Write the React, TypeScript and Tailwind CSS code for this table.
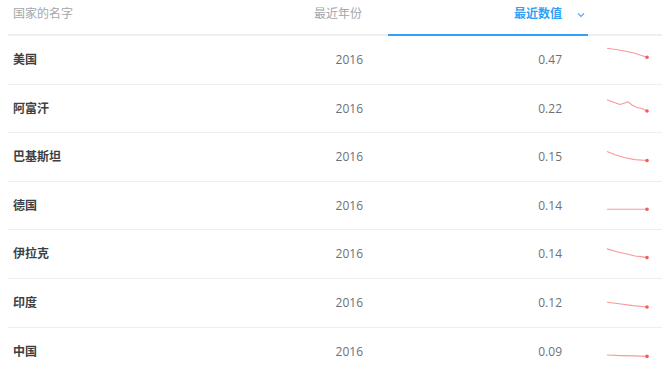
const rows = [
  { name: "美国", year: "2016", value: "0.47", pts: [[0, 12.3], [12, 14], [26, 16.8], [40, 21.3]] },
  { name: "阿富汗", year: "2016", value: "0.22", pts: [[0, 14.7], [6, 17], [13, 19.5], [18, 18], [21, 16.8], [25, 20], [30, 22.5], [35, 23.5], [40, 26]] },
  { name: "巴基斯坦", year: "2016", value: "0.15", pts: [[0, 18.5], [8, 21.8], [18, 24.8], [28, 26.6], [40, 27.5]] },
  { name: "德国", year: "2016", value: "0.14", pts: [[0, 27.2], [20, 27.3], [40, 27.3]] },
  { name: "伊拉克", year: "2016", value: "0.14", pts: [[0, 18.9], [10, 21.8], [20, 24], [28, 26], [34, 26.6], [40, 27.6]] },
  { name: "印度", year: "2016", value: "0.12", pts: [[0, 23.3], [12, 24.8], [26, 26.6], [40, 28]] },
  { name: "中国", year: "2016", value: "0.09", pts: [[0, 27], [14, 27.6], [28, 27.9], [40, 28.4]] },
];

function Spark({ pts }: { pts: number[][] }) {
  const d = pts.map((p, i) => `${i ? "L" : "M"}${p[0] + 1} ${p[1]}`).join(" ");
  const last = pts[pts.length - 1];
  return (
    <svg width="46" height="48" viewBox="0 0 46 48" className="ml-[18px]">
      <path d={d} fill="none" stroke="#f79a9a" strokeWidth="1.1" strokeLinejoin="round" />
      <circle cx={last[0] + 1} cy={last[1]} r="1.8" fill="#f25c5c" />
    </svg>
  );
}

export default function App() {
  return (
    <div className="h-[381px] w-[668px] overflow-hidden bg-white pl-2 text-[12px] [font-family:'Open_Sans','Noto_Sans_CJK_SC',sans-serif]">
      <div className="w-[654px]">
        <div className="grid h-[36px] grid-cols-[180px_200px_200px_74px] border-b-2 border-[#eceef0] leading-[18px]">
          <div className="pl-[5px] pt-[5px] text-[#a3a6aa]">国家的名字</div>
          <div className="pr-[26px] pt-[5px] text-right text-[#a3a6aa]">最近年份</div>
          <div className="-mb-[2px] flex justify-end border-b-2 border-[#2ea1f8] pt-[5px] text-[#2ea1f8]">
            <span className="font-semibold">最近数值</span>
            <svg width="8" height="18" viewBox="0 0 8 18" className="ml-[15px] mr-[3px]">
              <path d="M1 8.5 L4 11.5 L7 8.5" fill="none" stroke="#5aa9f0" strokeWidth="1.2" />
            </svg>
          </div>
          <div />
        </div>
        {rows.map((r, i) => (
          <div
            key={r.name}
            className={`grid h-[48.6px] grid-cols-[180px_200px_200px_74px] items-center ${i < rows.length - 1 ? "border-b border-[#eceef0]" : ""}`}
          >
            <div className="pl-[5px] font-bold text-[#3c3f44]">{r.name}</div>
            <div className="pr-[25px] text-right text-[#6e7176]">{r.year}</div>
            <div className="pr-[26px] text-right text-[#6e7176]">{r.value}</div>
            <div className="h-[48px]">
              <Spark pts={r.pts} />
            </div>
          </div>
        ))}
      </div>
    </div>
  );
}
